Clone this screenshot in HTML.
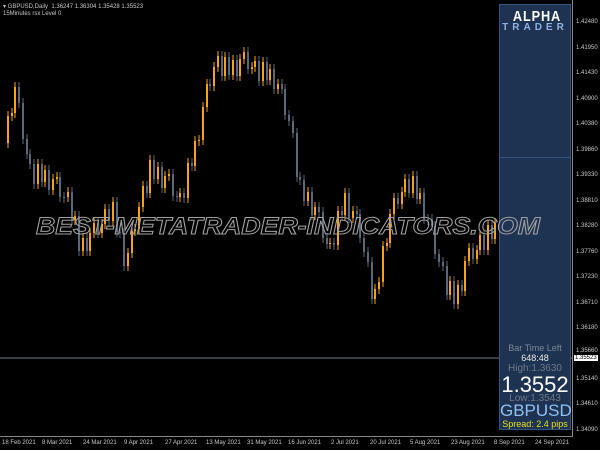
<!DOCTYPE html>
<html><head><meta charset="utf-8">
<style>
html,body{margin:0;padding:0;background:#000;width:600px;height:450px;overflow:hidden;font-family:"Liberation Sans",sans-serif}
#c{position:absolute;left:0;top:0}
#wm{position:absolute;left:0;top:0;z-index:5}
.t{position:absolute;color:#c8c8c8;font-size:6px;white-space:nowrap}
.pl{position:absolute;left:576px;color:#c8c8c8;font-size:6px}
.dl{position:absolute;top:440px;color:#c8c8c8;font-size:6px;white-space:nowrap}
#panel{position:absolute;left:499px;top:4px;width:72px;height:426px;background:#1e3352;border:1px solid #35557e;box-sizing:border-box}
.pc{position:absolute;left:0;width:70px;text-align:center;white-space:nowrap}
</style></head><body>
<svg id="c" width="600" height="450" xmlns="http://www.w3.org/2000/svg">
<line x1="0" y1="358" x2="572" y2="358" stroke="#6a7a8a" stroke-width="1"/>
<line x1="572.5" y1="0" x2="572.5" y2="436" stroke="#888" stroke-width="1"/>
<line x1="0" y1="436.5" x2="573" y2="436.5" stroke="#888" stroke-width="1"/>
<path fill="none" stroke="#f5a21e" stroke-width="1" d="M8 111V148M12 108V121M15 82V118M38 159V189M45 165V187M53 174V195M57 172V184M68 187V202M75 211V225M83 233V256M90 228V256M94 218V238M102 219V238M105 204V229M113 197V226M128 248V271M132 226V258M135 224V236M139 202V234M143 181V212M150 155V198M158 162V184M165 171V193M169 169V181M180 188V202M188 158V203M195 136V171M199 135V146M203 102V145M207 79V112M214 62V91M218 51V72M225 52V81M233 55V80M240 54V81M244 47V64M252 62V74M255 56V72M263 57V86M270 64V85M278 79V94M308 187V206M315 202V220M330 238V249M338 206V250M345 188V220M353 206V223M375 284V304M379 277V294M383 241V287M387 238V251M390 209V248M394 193V219M402 187V209M405 174V197M413 171V198M420 188V204M450 276V300M458 280V309M465 256V296M469 243V266M477 245V264M480 230V255M488 220V255M495 218V244"/>
<path fill="none" stroke="#f5a21e" stroke-width="2" d="M8 116V143M12 113V116M15 87V113M38 164V184M45 170V182M53 179V190M57 177V179M68 192V197M75 216V220M83 238V251M90 233V251M94 223V233M102 224V233M105 209V224M113 202V221M128 253V266M132 231V253M135 229V231M139 207V229M143 186V207M150 160V193M158 167V179M165 176V188M169 174V176M180 193V197M188 163V198M195 141V166M199 140V141M203 107V140M207 84V107M214 67V86M218 56V67M225 57V76M233 60V75M240 59V76M244 52V59M252 67V69M255 61V67M263 62V81M270 69V80M278 84V89M308 192V201M315 207V215M330 243V244M338 211V245M345 193V215M353 211V218M375 289V299M379 282V289M383 246V282M387 243V246M390 214V243M394 198V214M402 192V204M405 179V192M413 176V193M420 193V199M450 281V295M458 285V304M465 261V291M469 248V261M477 250V259M480 235V250M488 225V250M495 223V239"/>
<path fill="none" stroke="#5c6878" stroke-width="1" d="M19 82V108M23 98V144M27 134V159M30 149V169M34 159V189M42 159V187M49 165V195M60 172V202M64 192V203M72 187V225M79 211V256M87 233V256M98 218V238M109 204V226M117 197V237M120 227V238M124 228V271M147 181V198M154 155V184M162 162V193M173 169V201M177 191V202M184 188V203M192 158V171M210 79V91M222 51V81M229 52V80M237 55V81M248 47V74M259 56V86M267 57V85M274 64V94M282 79V94M285 84V120M289 110V126M293 116V138M297 128V182M300 172V185M304 175V206M312 187V220M319 202V217M323 207V243M327 233V249M334 238V250M342 206V220M349 188V223M357 206V219M360 209V243M364 233V257M368 247V267M372 257V304M398 193V209M409 174V198M417 171V204M424 188V224M428 214V225M432 214V231M435 221V259M439 249V267M443 257V271M447 261V300M454 276V309M462 280V296M473 243V264M484 230V255M492 220V244"/>
<path fill="none" stroke="#5c6878" stroke-width="2" d="M19 87V103M23 103V139M27 139V154M30 154V164M34 164V184M42 164V182M49 170V190M60 177V197M64 197V198M72 192V220M79 216V251M87 238V251M98 223V233M109 209V221M117 202V232M120 232V233M124 233V266M147 186V193M154 160V179M162 167V188M173 174V196M177 196V197M184 193V198M192 163V166M210 84V86M222 56V76M229 57V75M237 60V76M248 52V69M259 61V81M267 62V80M274 69V89M282 84V89M285 89V115M289 115V121M293 121V133M297 133V177M300 177V180M304 180V201M312 192V215M319 207V212M323 212V238M327 238V244M334 243V245M342 211V215M349 193V218M357 211V214M360 214V238M364 238V252M368 252V262M372 262V299M398 198V204M409 179V193M417 176V199M424 193V219M428 219V220M432 219V226M435 226V254M439 254V262M443 262V266M447 266V295M454 281V304M462 285V291M473 248V259M484 235V250M492 225V239"/>
</svg>
<div class="t" style="left:3px;top:3px">▾ GBPUSD,Daily&nbsp; 1.36247 1.36304 1.35428 1.35523</div>
<div class="t" style="left:3px;top:11px">15Minutes rsx Level 0</div>

<div id="panel">
<div style="position:absolute;left:0;top:152px;width:70px;height:1px;background:#35557e"></div>
<div class="pc" style="top:3px;left:2px;color:#fff;font-size:15px;font-weight:bold;letter-spacing:1px;transform:scaleX(0.85)">ALPHA</div>
<div class="pc" style="top:17px;color:#8fb3e0;font-size:10px;font-weight:bold;letter-spacing:4px">TRADER</div>
<div class="pc" style="top:338px;color:#7c8896;font-size:9px">Bar Time Left</div>
<div class="pc" style="top:348px;color:#e8e8e8;font-size:9px">648:48</div>
<div class="pc" style="top:358px;color:#6c7886;font-size:10px">High:1.3630</div>
<div class="pc" style="top:367px;color:#fff;font-size:22px">1.3552</div>
<div class="pc" style="top:388px;color:#6c7886;font-size:10px">Low:1.3543</div>
<div class="pc" style="top:396px;color:#8fc0f0;font-size:17px">GBPUSD</div>
<div class="pc" style="top:414px;color:#e0e020;font-size:9px">Spread: 2.4 pips</div>
</div>

<svg id="wm" width="600" height="450" xmlns="http://www.w3.org/2000/svg">
<text x="36" y="234" font-family="Liberation Sans" font-size="24" font-style="italic" font-weight="bold" fill="none" stroke="#a0a0a0" stroke-width="1" textLength="504" lengthAdjust="spacingAndGlyphs">BEST-METATRADER-INDICATORS.COM</text>
</svg>

<div class="pl" style="top:19px">1.42480</div>
<div class="pl" style="top:45px">1.41950</div>
<div class="pl" style="top:70px">1.41430</div>
<div class="pl" style="top:96px">1.40900</div>
<div class="pl" style="top:121px">1.40380</div>
<div class="pl" style="top:147px">1.39860</div>
<div class="pl" style="top:172px">1.39330</div>
<div class="pl" style="top:198px">1.38810</div>
<div class="pl" style="top:223px">1.38280</div>
<div class="pl" style="top:249px">1.37760</div>
<div class="pl" style="top:274px">1.37230</div>
<div class="pl" style="top:300px">1.36710</div>
<div class="pl" style="top:325px">1.36180</div>
<div class="pl" style="top:348px">1.35660</div>
<div class="pl" style="top:355px;left:574px;background:#fff;color:#000;padding:0 1px">1.35523</div>
<div class="pl" style="top:376px">1.35140</div>
<div class="pl" style="top:401px">1.34610</div>
<div class="pl" style="top:427px">1.34090</div>

<div class="dl" style="left:2px">18 Feb 2021</div>
<div class="dl" style="left:42px">8 Mar 2021</div>
<div class="dl" style="left:83px">24 Mar 2021</div>
<div class="dl" style="left:124px">9 Apr 2021</div>
<div class="dl" style="left:165px">27 Apr 2021</div>
<div class="dl" style="left:206px">13 May 2021</div>
<div class="dl" style="left:247px">31 May 2021</div>
<div class="dl" style="left:288px">16 Jun 2021</div>
<div class="dl" style="left:331px">2 Jul 2021</div>
<div class="dl" style="left:370px">20 Jul 2021</div>
<div class="dl" style="left:410px">5 Aug 2021</div>
<div class="dl" style="left:451px">23 Aug 2021</div>
<div class="dl" style="left:494px">8 Sep 2021</div>
<div class="dl" style="left:535px">24 Sep 2021</div>
</body></html>
